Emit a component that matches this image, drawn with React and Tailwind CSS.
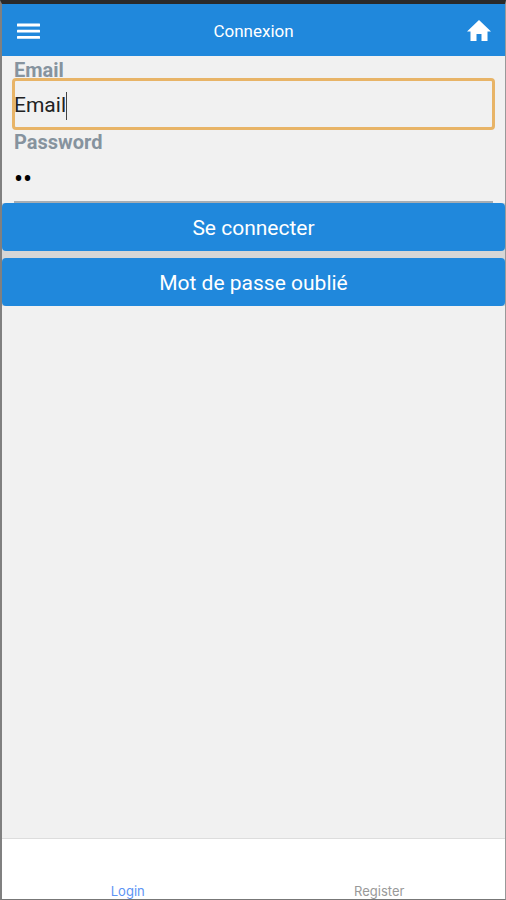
import React, { useState } from "react";

export default function App() {
  const [email, setEmail] = useState("Email");
  const [password, setPassword] = useState("ab");
  const [tab, setTab] = useState("login");

  const handleSubmit = (e) => {
    e.preventDefault();
    console.log("login " + email);
  };

  return (
    <div className="flex min-h-screen flex-col border-t-4 border-r border-b border-l-2 border-t-[#2a2a2a] border-r-[#999999] border-b-[#777777] border-l-[#808080] bg-[#f1f1f1] font-['Inter',sans-serif]">
      <header className="flex h-[52px] items-center justify-between bg-[#2088dc] pt-1 pr-2 pl-3 text-white">
        <button type="button" aria-label="Menu" className="flex">
          <svg className="h-8 w-8" viewBox="0 0 32 32" fill="currentColor">
            <rect x="3" y="7.500" width="23" height="2.900" rx="0.500" />
            <rect x="3" y="13.700" width="23" height="2.900" rx="0.500" />
            <rect x="3" y="19.900" width="23" height="2.900" rx="0.500" />
          </svg>
        </button>
        <h1 className="font-['Roboto',sans-serif] text-[17px]">Connexion</h1>
        <button type="button" aria-label="Home" className="flex">
          <svg className="h-9 w-9" viewBox="0 0 36 36" fill="currentColor">
            <path d="M18 6 6 17.500h3.500V27h6v-7h5v7h6v-9.500H30z" />
          </svg>
        </button>
      </header>

      <main className="flex-1">
        <form onSubmit={handleSubmit}>
          <div className="px-3 pt-1">
            <label htmlFor="email" className="block font-['Roboto',sans-serif] text-xl leading-5 font-bold text-[#86939e]">
              Email
            </label>
            <div className="flex h-12 items-center rounded-xs pt-1 outline-3 -outline-offset-1 outline-[#e8b467]">
              <input
                id="email"
                name="email"
                type="text"
                value={email}
                onChange={(e) => setEmail(e.target.value)}
                className="field-sizing-content font-['Roboto',sans-serif] text-[21px] text-[#222222] outline-none"
              />
              {/* caret */}
              <span className="h-7 w-px bg-[#444444]"></span>
            </div>
          </div>
          <div className="px-3 pt-1">
            <label htmlFor="password" className="block font-['Roboto',sans-serif] text-xl leading-5 font-bold text-[#86939e]">
              Password
            </label>
            <input
              id="password"
              name="password"
              type="password"
              value={password}
              onChange={(e) => setPassword(e.target.value)}
              className="block h-[51px] w-full border-b-2 border-[#a5adb4] pt-1 font-['Roboto',sans-serif] text-[27px] text-black outline-none"
            />
          </div>
          <div className="flex flex-col gap-[7px] bg-[#d6d6d6]">
            <button type="submit" className="h-12 w-full rounded-sm bg-[#2088dc] pt-1 font-['Roboto',sans-serif] text-[21px] text-white">
              Se connecter
            </button>
            <button type="button" className="h-12 w-full rounded-sm bg-[#2088dc] pt-1 font-['Roboto',sans-serif] text-[21px] text-white">
              Mot de passe oublié
            </button>
          </div>
        </form>
      </main>

      <nav className="flex h-[61px] items-end border-t border-[#dddddd] bg-white text-[13px] leading-4">
        <button
          type="button"
          onClick={() => setTab("login")}
          className={tab === "login" ? "flex-1 text-[#5c94f5]" : "flex-1 text-[#999999]"}
        >
          Login
        </button>
        <button
          type="button"
          onClick={() => setTab("register")}
          className={tab === "register" ? "flex-1 text-[#5c94f5]" : "flex-1 text-[#999999]"}
        >
          Register
        </button>
      </nav>
    </div>
  );
}
